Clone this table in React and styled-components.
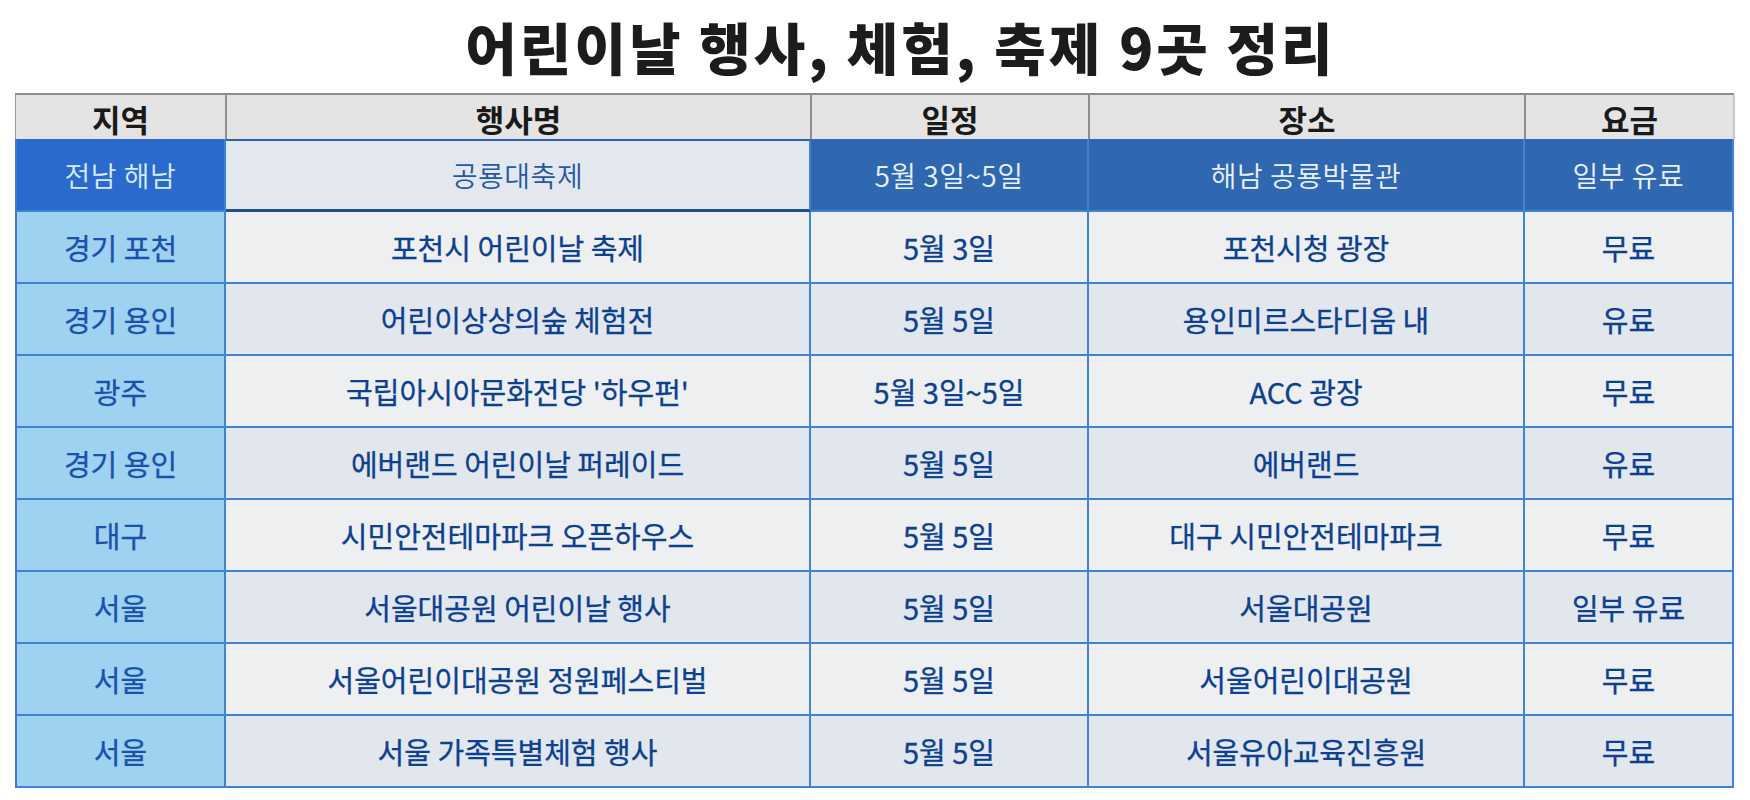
import React from "react";
import styled, { createGlobalStyle, css } from "styled-components";

const Global = createGlobalStyle`
  html, body { margin: 0; padding: 0; background: #ffffff; }
  body { width: 1750px; height: 800px; overflow: hidden; font-family: "Noto Sans CJK KR", "Noto Sans", sans-serif; }
`;

const Page = styled.div`
  width: 1750px;
  height: 800px;
  box-sizing: border-box;
  padding: 0 16px 0 15px;
  display: flex;
  flex-direction: column;
`;

const Title = styled.h1`
  margin: 0;
  height: 93px;
  box-sizing: border-box;
  padding: 8px 0 0 52px;
  text-align: center;
  font-family: "Noto Sans CJK KR", sans-serif;
  font-weight: 900;
  font-size: 56px;
  line-height: 76px;
  letter-spacing: 3px;
  color: #1c1c1c;
`;

const cols = "211px 585px 278px 436px 209px";

const Table = styled.div`
  display: flex;
  flex-direction: column;
  width: 1719px;
`;

const HeadRow = styled.div`
  display: grid;
  grid-template-columns: ${cols};
  height: 46px;
  box-sizing: border-box;
  border-top: 2px solid #8d8d8d;
  border-left: 1px solid #9a9a9a;
  background: #e4e4e4;
`;

const HeadCell = styled.div`
  display: flex;
  align-items: center;
  justify-content: center;
  border-right: 2px solid #8f8f8f;
  font-weight: 700;
  font-size: 31px;
  line-height: 1;
  padding-top: 2px;
  color: #1a1a1a;
  box-sizing: border-box;
  &:last-child { border-right: 2px solid #c8c8c8; }
`;

const Row = styled.div`
  display: grid;
  grid-template-columns: ${cols};
  height: ${(p) => (p.$first ? 73 : 72)}px;
  box-sizing: border-box;
`;

const palette = {
  regionTop: { bg: "#2a6acc", fg: "#d6ebff" },
  nameTop: { bg: "#e3e8ee", fg: "#2458a6" },
  darkTop: { bg: "#3067b1", fg: "#e8f0fa" },
  region: { bg: "#9ed2f0", fg: "#1a50ae" },
  odd: { bg: "#eeeff1", fg: "#0c4090" },
  even: { bg: "#e2e7ed", fg: "#0c4090" },
};

const Cell = styled.div`
  display: flex;
  align-items: center;
  justify-content: center;
  box-sizing: border-box;
  background: ${(p) => palette[p.$tone].bg};
  color: ${(p) => palette[p.$tone].fg};
  font-size: ${(p) => (p.$light ? 28 : 29)}px;
  font-weight: ${(p) => (p.$light ? 350 : 400)};
  letter-spacing: ${(p) => (p.$light ? "0.5px" : "0")};
  -webkit-text-stroke: ${(p) => (p.$light ? "0" : "0.3px")};
  border-right: 2px solid #3f84d2;
  border-bottom: 2px solid #3f84d2;
  ${(p) =>
    p.$left &&
    css`
      border-left: 2px solid #3a7cc8;
    `}
  ${(p) =>
    p.$navyBottom &&
    css`
      border-bottom: 3px solid #1f4f93;
      border-top: 2px solid #2f63a8;
    `}
`;

const rows = [
  ["전남 해남", "공룡대축제", "5월 3일~5일", "해남 공룡박물관", "일부 유료"],
  ["경기 포천", "포천시 어린이날 축제", "5월 3일", "포천시청 광장", "무료"],
  ["경기 용인", "어린이상상의숲 체험전", "5월 5일", "용인미르스타디움 내", "유료"],
  ["광주", "국립아시아문화전당 '하우펀'", "5월 3일~5일", "ACC 광장", "무료"],
  ["경기 용인", "에버랜드 어린이날 퍼레이드", "5월 5일", "에버랜드", "유료"],
  ["대구", "시민안전테마파크 오픈하우스", "5월 5일", "대구 시민안전테마파크", "무료"],
  ["서울", "서울대공원 어린이날 행사", "5월 5일", "서울대공원", "일부 유료"],
  ["서울", "서울어린이대공원 정원페스티벌", "5월 5일", "서울어린이대공원", "무료"],
  ["서울", "서울 가족특별체험 행사", "5월 5일", "서울유아교육진흥원", "무료"],
];

const headers = ["지역", "행사명", "일정", "장소", "요금"];

export default function App() {
  return (
    <>
      <Global />
      <Page>
        <Title>어린이날 행사, 체험, 축제 9곳 정리</Title>
        <Table>
          <HeadRow>
            {headers.map((h) => (
              <HeadCell key={h}>{h}</HeadCell>
            ))}
          </HeadRow>
          {rows.map((r, i) => {
            const first = i === 0;
            const tone = i % 2 === 1 ? "odd" : "even";
            return (
              <Row key={i} $first={first}>
                {r.map((c, j) => {
                  let t;
                  if (first) t = j === 0 ? "regionTop" : j === 1 ? "nameTop" : "darkTop";
                  else t = j === 0 ? "region" : tone;
                  return (
                    <Cell
                      key={j}
                      $tone={t}
                      $left={j === 0}
                      $light={first}
                      $navyBottom={first && j === 1}
                    >
                      {c}
                    </Cell>
                  );
                })}
              </Row>
            );
          })}
        </Table>
      </Page>
    </>
  );
}
